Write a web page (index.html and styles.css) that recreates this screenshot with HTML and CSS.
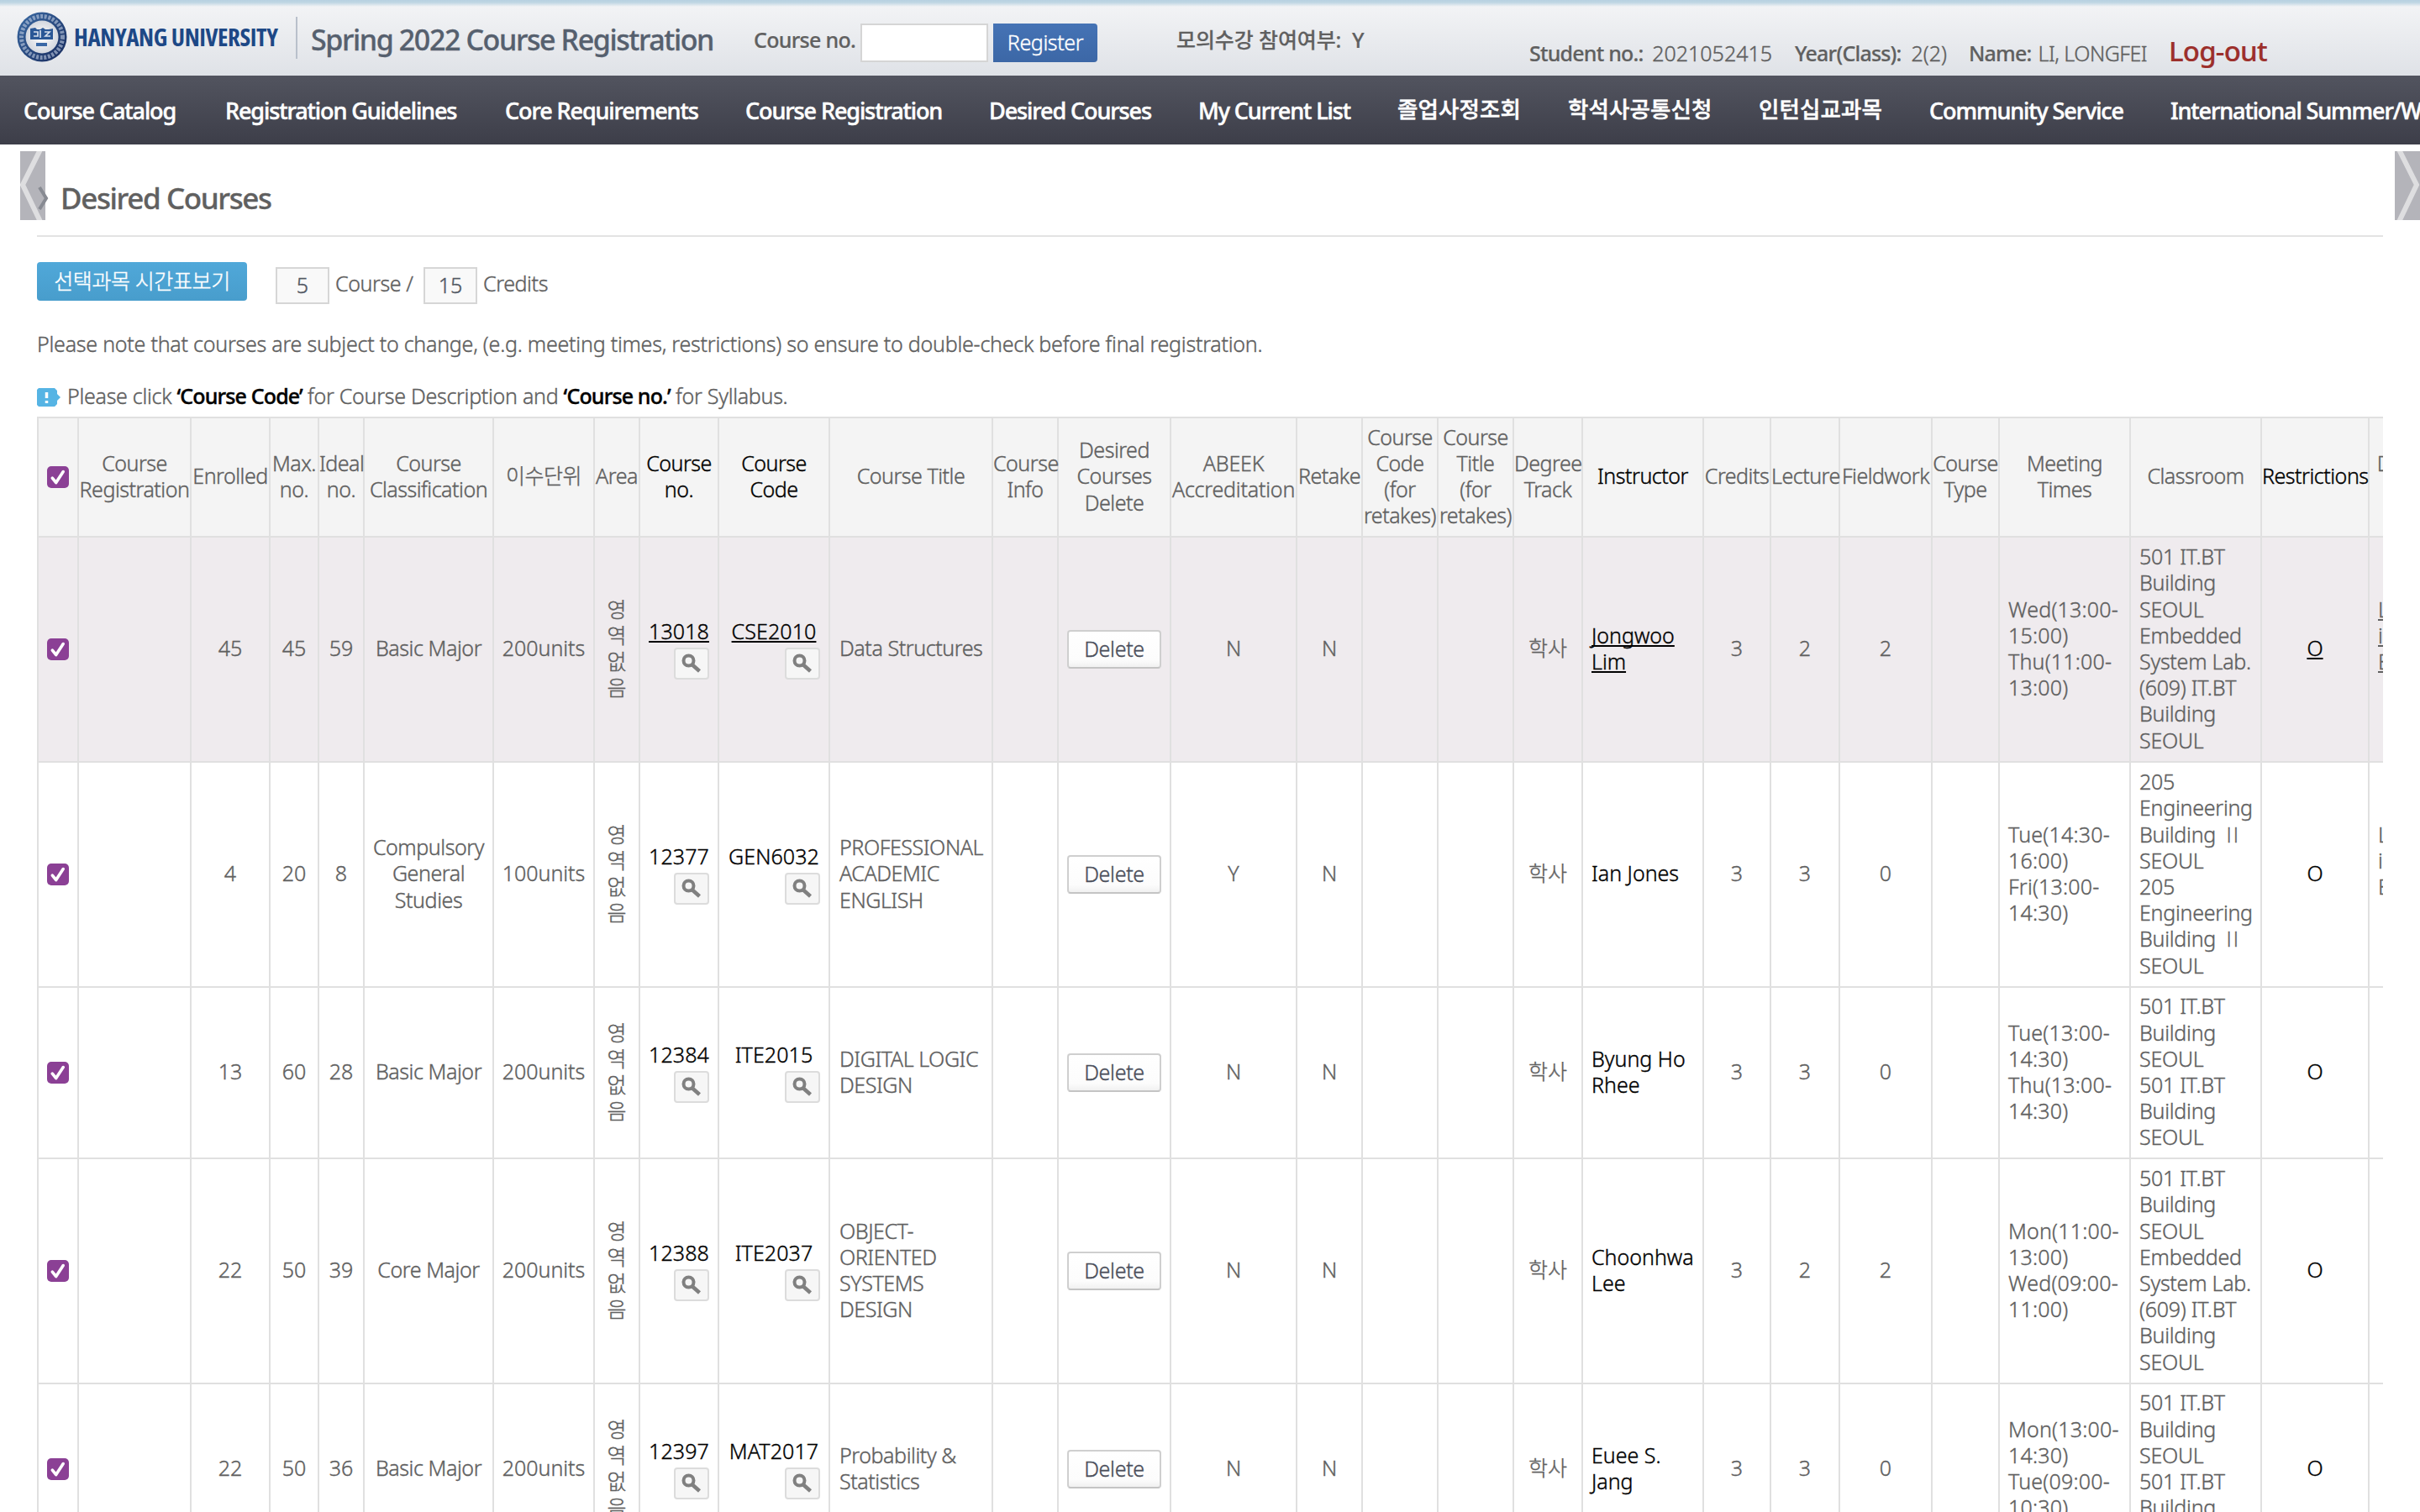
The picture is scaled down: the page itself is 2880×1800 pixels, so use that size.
FILE: index.html
```html
<!DOCTYPE html>
<html lang="ko">
<head>
<meta charset="utf-8">
<title>Spring 2022 Course Registration</title>
<link rel="stylesheet" href="styles.css">
</head>
<body>
<svg width="0" height="0" class="defs">
  <symbol id="check" viewBox="0 0 26 26"><rect width="26" height="26" rx="5" fill="#8b4095"/><path d="M6.300 14.200l4.400 5.300L19.200 6.600" fill="none" stroke="#fff" stroke-width="3.600" stroke-linecap="round" stroke-linejoin="round"/></symbol>
  <symbol id="lens" viewBox="0 0 42 38"><rect x="1" y="1" width="40" height="36" rx="3" fill="#f6f6f6" stroke="#dcdcdc" stroke-width="2"/><circle cx="17.500" cy="15.500" r="6" fill="#f6f6f6" stroke="#808080" stroke-width="4"/><path d="M22 20.500l8.500 7.500" stroke="#808080" stroke-width="4.500"/></symbol>
</svg>

<header class="top">
  <svg class="emblem" viewBox="0 0 60 60">
    <defs><radialGradient id="core"><stop offset="0" stop-color="#fff"/><stop offset="1" stop-color="#d3d7df"/></radialGradient>
    <linearGradient id="ring" x1="0" y1="0" x2="1" y2="1"><stop offset="0" stop-color="#3b6ba5"/><stop offset="1" stop-color="#172a5c"/></linearGradient></defs>
    <circle cx="30" cy="30" r="29.500" fill="url(#ring)"/>
    <circle cx="30" cy="30" r="24.500" fill="none" stroke="#c3cfe2" stroke-width="5" stroke-dasharray="3 1.700" opacity=".6"/>
    <circle cx="30" cy="30" r="19.500" fill="url(#core)"/>
    <path d="M16 20l6-1 2 2h4l3-2 3 2h4l5-1v13H16z" fill="#2a5796"/>
    <path d="M20 24h5v5h-5M28 22v9M33 24h6l-5 5h6" fill="none" stroke="#d5deec" stroke-width="1.700"/>
    <rect x="23" y="37" width="13" height="4" fill="#3a68a6"/>
  </svg>
  <div class="brand">HANYANG UNIVERSITY</div>
  <div class="divider"></div>
  <div class="site-title">Spring 2022 Course Registration</div>
  <div class="quick-label">Course no.</div>
  <div class="quick-input"></div>
  <div class="quick-btn">Register</div>
  <div class="mock">모의수강 참여여부:</div>
  <div class="mock-value">Y</div>
  <div class="who w-no"><b>Student no.:</b> <span>2021052415</span></div>
  <div class="who w-year"><b>Year(Class):</b> <span>2(2)</span></div>
  <div class="who w-name"><b>Name:</b> <span>LI, LONGFEI</span></div>
  <div class="logout">Log-out</div>
</header>

<nav class="menu">
  <a>Course Catalog</a><a>Registration Guidelines</a><a>Core Requirements</a><a>Course Registration</a><a>Desired Courses</a><a>My Current List</a><a class="ko">졸업사정조회</a><a class="ko">학석사공통신청</a><a class="ko">인턴십교과목</a><a>Community Service</a><a>International Summer/Winter</a>
</nav>

<svg class="slide prev" viewBox="0 0 30 82"><rect width="30" height="82" fill="#b4b4ba"/><path d="M25 -4L3 40l22 46" fill="none" stroke="#dedee0" stroke-width="6"/></svg>
<svg class="slide next" viewBox="0 0 30 82"><rect width="30" height="82" fill="#b4b4ba"/><path d="M4 -4l22 44L4 86" fill="none" stroke="#dedee0" stroke-width="6"/></svg>

<main class="page">
  <h1 class="heading"><svg class="mark" viewBox="0 0 14 28"><path d="M3 1l8 13-8 13" fill="none" stroke="#878a92" stroke-width="4"/></svg>Desired Courses</h1>

  <div class="tools">
    <div class="timetable">선택과목 시간표보기</div>
    <div class="count">5</div><div class="unit u1">Course /</div>
    <div class="count">15</div><div class="unit">Credits</div>
  </div>

  <p class="note">Please note that courses are subject to change, (e.g. meeting times, restrictions) so ensure to double-check before final registration.</p>
  <p class="tip"><svg class="tip-icon" viewBox="0 0 28 22"><path d="M2 0h19l3 3v4l4 4-4 4v4l-3 3H2l-2-2V2z" fill="#56b4e4"/><path d="M11.500 5v7M11.500 15v3" stroke="#fff" stroke-width="3.500"/></svg><span>Please click <b>‘Course Code’</b> for Course Description and <b>‘Course no.’</b> for Syllabus.</span></p>

  <div class="table-clip">
  <table class="courses">
    <colgroup><col class="w48"><col class="w134"><col class="w94"><col class="w58"><col class="w54"><col class="w154"><col class="w120"><col class="w54"><col class="w94"><col class="w132"><col class="w194"><col class="w78"><col class="w134"><col class="w150"><col class="w78"><col class="w90"><col class="w90"><col class="w82"><col class="w144"><col class="w80"><col class="w82"><col class="w110"><col class="w80"><col class="w156"><col class="w156"><col class="w128"><col class="w106"></colgroup>
    <tr class="head">
      <th><svg class="cb"><use href="#check"/></svg></th><th>Course<br>Registration</th><th>Enrolled</th><th>Max.<br>no.</th><th>Ideal<br>no.</th><th>Course<br>Classification</th><th>이수단위</th><th>Area</th><th class="dark">Course<br>no.</th><th class="dark">Course<br>Code</th><th>Course Title</th><th>Course<br>Info</th><th>Desired<br>Courses<br>Delete</th><th class="wide">ABEEK<br>Accreditation</th><th>Retake</th><th>Course<br>Code<br>(for<br>retakes)</th><th>Course<br>Title<br>(for<br>retakes)</th><th>Degree<br>Track</th><th class="dark">Instructor</th><th>Credits</th><th>Lecture</th><th>Fieldwork</th><th>Course<br>Type</th><th>Meeting<br>Times</th><th>Classroom</th><th class="dark">Restrictions</th><th>Delivery<br>Type</th>
    </tr>
    <tr class="tall picked">
      <td><svg class="cb"><use href="#check"/></svg></td><td></td><td>45</td><td>45</td><td>59</td><td class="txt">Basic Major</td><td>200units</td><td class="area">영<br>역<br>없<br>음</td><td class="look"><a>13018</a><svg><use href="#lens"/></svg></td><td class="look"><a>CSE2010</a><svg><use href="#lens"/></svg></td><td class="left txt">Data Structures</td><td></td><td><div class="del">Delete</div></td><td>N</td><td>N</td><td></td><td></td><td>학사</td><td class="left dark"><a>Jongwoo<br>Lim</a></td><td>3</td><td>2</td><td>2</td><td></td><td class="left time">Wed(13:00-<br>15:00)<br>Thu(11:00-<br>13:00)</td><td class="left room">501 IT.BT<br>Building<br>SEOUL<br>Embedded<br>System Lab.<br>(609) IT.BT<br>Building<br>SEOUL</td><td class="dark"><a>O</a></td><td class="left"><a>Lecture<br>in<br>English</a><br>&nbsp;</td>
    </tr>
    <tr class="tall">
      <td><svg class="cb"><use href="#check"/></svg></td><td></td><td>4</td><td>20</td><td>8</td><td class="txt">Compulsory<br>General<br>Studies</td><td>100units</td><td class="area">영<br>역<br>없<br>음</td><td class="look"><a>12377</a><svg><use href="#lens"/></svg></td><td class="look"><a>GEN6032</a><svg><use href="#lens"/></svg></td><td class="left txt">PROFESSIONAL<br>ACADEMIC<br>ENGLISH</td><td></td><td><div class="del">Delete</div></td><td>Y</td><td>N</td><td></td><td></td><td>학사</td><td class="left dark">Ian Jones</td><td>3</td><td>3</td><td>0</td><td></td><td class="left time">Tue(14:30-<br>16:00)<br>Fri(13:00-<br>14:30)</td><td class="left room">205<br>Engineering<br>Building&nbsp; <i>II</i><br>SEOUL<br>205<br>Engineering<br>Building&nbsp; <i>II</i><br>SEOUL</td><td class="dark">O</td><td class="left">Lecture<br>in<br>English<br>&nbsp;</td>
    </tr>
    <tr class="short">
      <td><svg class="cb"><use href="#check"/></svg></td><td></td><td>13</td><td>60</td><td>28</td><td class="txt">Basic Major</td><td>200units</td><td class="area">영<br>역<br>없<br>음</td><td class="look"><a>12384</a><svg><use href="#lens"/></svg></td><td class="look"><a>ITE2015</a><svg><use href="#lens"/></svg></td><td class="left txt">DIGITAL LOGIC<br>DESIGN</td><td></td><td><div class="del">Delete</div></td><td>N</td><td>N</td><td></td><td></td><td>학사</td><td class="left dark">Byung Ho<br>Rhee</td><td>3</td><td>3</td><td>0</td><td></td><td class="left time">Tue(13:00-<br>14:30)<br>Thu(13:00-<br>14:30)</td><td class="left room">501 IT.BT<br>Building<br>SEOUL<br>501 IT.BT<br>Building<br>SEOUL</td><td class="dark">O</td><td></td>
    </tr>
    <tr class="tall">
      <td><svg class="cb"><use href="#check"/></svg></td><td></td><td>22</td><td>50</td><td>39</td><td class="txt">Core Major</td><td>200units</td><td class="area">영<br>역<br>없<br>음</td><td class="look"><a>12388</a><svg><use href="#lens"/></svg></td><td class="look"><a>ITE2037</a><svg><use href="#lens"/></svg></td><td class="left txt">OBJECT-<br>ORIENTED<br>SYSTEMS<br>DESIGN</td><td></td><td><div class="del">Delete</div></td><td>N</td><td>N</td><td></td><td></td><td>학사</td><td class="left dark">Choonhwa<br>Lee</td><td>3</td><td>2</td><td>2</td><td></td><td class="left time">Mon(11:00-<br>13:00)<br>Wed(09:00-<br>11:00)</td><td class="left room">501 IT.BT<br>Building<br>SEOUL<br>Embedded<br>System Lab.<br>(609) IT.BT<br>Building<br>SEOUL</td><td class="dark">O</td><td></td>
    </tr>
    <tr class="short">
      <td><svg class="cb"><use href="#check"/></svg></td><td></td><td>22</td><td>50</td><td>36</td><td class="txt">Basic Major</td><td>200units</td><td class="area">영<br>역<br>없<br>음</td><td class="look"><a>12397</a><svg><use href="#lens"/></svg></td><td class="look"><a>MAT2017</a><svg><use href="#lens"/></svg></td><td class="left txt">Probability &amp;<br>Statistics</td><td></td><td><div class="del">Delete</div></td><td>N</td><td>N</td><td></td><td></td><td>학사</td><td class="left dark">Euee S.<br>Jang</td><td>3</td><td>3</td><td>0</td><td></td><td class="left time">Mon(13:00-<br>14:30)<br>Tue(09:00-<br>10:30)</td><td class="left room">501 IT.BT<br>Building<br>SEOUL<br>501 IT.BT<br>Building<br>SEOUL</td><td class="dark">O</td><td></td>
    </tr>
  </table>
  </div>
</main>
</body>
</html>
```
FILE: styles.css
```css
* { box-sizing: border-box; }
html, body { height: 1800px; overflow: hidden; }
body {
  margin: 0;
  background: #fff;
  color: #606060;
  font: 300 25px/32px "Noto Sans", "Noto Sans CJK KR", sans-serif;
  -webkit-text-stroke: .4px currentColor;
  position: relative;
}
svg { display: block; }
.defs { position: absolute; }
b { font-weight: 500; }

/* header */
.top {
  height: 90px;
  display: flex;
  align-items: flex-start;
  white-space: nowrap;
  background: linear-gradient(#b7d1e1 0, #bfd6e3 3px, #f2f3f5 8px, #dfe2e7 90px);
}
.top > * { flex: none; }
.emblem { width: 60px; height: 60px; margin: 14px 0 0 20px; }
.brand {
  width: 244px; margin: 24px 0 0 8px;
  font: 700 29px/40px "Open Sans", sans-serif;
  font-stretch: 75%; letter-spacing: -.4px;
  color: #1d4886;
  -webkit-text-stroke: 0;
}
.divider { width: 2px; height: 50px; margin: 20px 0 0 20px; background: #b9c0cb; }
.site-title {
  width: 478px; margin: 27px 0 0 16px;
  font-size: 34px; line-height: 40px; font-weight: 500; letter-spacing: -1.4px;
  color: #56606e;
  -webkit-text-stroke: .3px;
}
.quick-label { width: 122px; margin: 31px 0 0 49px; font-weight: 500; letter-spacing: -.7px; -webkit-text-stroke: .2px; }
.quick-input { width: 152px; height: 46px; margin: 28px 0 0 5px; background: #fff; border: 2px solid #d5d5d5; }
.quick-btn {
  width: 124px; height: 46px; margin: 28px 0 0 6px;
  line-height: 45px; text-align: center; letter-spacing: -.4px;
  color: #fff; background: linear-gradient(#4573b5, #3c67a6);
  border-radius: 0 4px 4px 0;
}
.mock { width: 198px; margin: 31px 0 0 94px; font-weight: 500; letter-spacing: -.1px; -webkit-text-stroke: .2px; }
.mock-value { width: 20px; margin: 31px 0 0 11px; font-weight: 500; -webkit-text-stroke: .2px; }
.who { display: flex; justify-content: space-between; margin-top: 47px; }
.who b { letter-spacing: -.8px; -webkit-text-stroke: .2px; }
.w-no { width: 289px; margin-left: 191px; }
.w-year { width: 181px; margin-left: 27px; }
.w-name { width: 212px; margin-left: 26px; }
.w-name span { letter-spacing: -.5px; }
.logout { margin: 41px 0 0 26px; font-size: 33px; line-height: 40px; font-weight: 500; letter-spacing: -.8px; color: #9c2f2b; -webkit-text-stroke: .2px; }

/* main menu */
.menu {
  height: 82px;
  overflow: hidden;
  padding-left: 28px;
  display: grid;
  grid-template-columns: 240px 333px 286px 290px 249px 237px 203px 227px 203px 287px 400px;
  background: linear-gradient(#52545f, #3d3e49);
  color: #fff;
  font-size: 27px; font-weight: 500; line-height: 83px; letter-spacing: -1.1px;
  white-space: nowrap;
  -webkit-text-stroke: .5px;
}
.menu .ko { font-size: 26.500px; letter-spacing: .1px; line-height: 81px; }

.slide { position: absolute; top: 180px; width: 30px; height: 82px; }
.prev { left: 24px; }
.next { right: 0; }

/* page */
.page { width: 2792px; margin-left: 44px; }
.heading {
  margin: 0; padding: 44px 0 24px;
  border-bottom: 2px solid #e3e3e3;
  display: flex;
  font-size: 35px; line-height: 40px; font-weight: 500; letter-spacing: -1.4px;
  -webkit-text-stroke: .3px;
}
.mark { position: relative; width: 14px; height: 28px; margin: 6px 14px 0 0; }
.tools { display: flex; align-items: flex-start; padding-top: 30px; height: 82px; }
.timetable {
  width: 250px; height: 46px; margin-right: 34px;
  line-height: 44px; text-align: center; letter-spacing: -.4px;
  color: #fff; background: linear-gradient(#50a8d9, #489dcc);
  border-radius: 4px;
}
.count {
  width: 64px; height: 44px; margin-top: 6px;
  border: 2px solid #d6d6d6; background: #f9f9f9;
  line-height: 39px; text-align: center; color: #515863;
}
.unit { margin: 9px 0 0 7px; letter-spacing: -.4px; }
.u1 { width: 105px; }
.note { margin: 29px 0 30px; letter-spacing: -.235px; }
.tip { margin: 0 0 9px; display: flex; letter-spacing: -.28px; }
.tip b { color: #000; letter-spacing: -.85px; -webkit-text-stroke: .4px #000; }
.tip-icon { width: 28px; height: 22px; margin: 7px 8px 0 0; }

/* course table */
.table-clip { width: 2792px; overflow: hidden; }
.courses {
  width: 2880px;
  table-layout: fixed;
  border-collapse: separate; border-spacing: 0;
  border-top: 2px solid #e0e0e0;
  line-height: 31.2px;
  white-space: nowrap;
}
.w48 { width: 48px; } .w54 { width: 54px; } .w58 { width: 58px; } .w78 { width: 78px; }
.w80 { width: 80px; } .w82 { width: 82px; } .w90 { width: 90px; } .w94 { width: 94px; }
.w106 { width: 106px; } .w110 { width: 110px; } .w120 { width: 120px; } .w128 { width: 128px; }
.w132 { width: 132px; } .w134 { width: 134px; } .w144 { width: 144px; } .w150 { width: 150px; }
.w154 { width: 154px; } .w156 { width: 156px; } .w194 { width: 194px; }
.courses th, .courses td {
  padding: 0 0 2px;
  border: solid #e0e0e0; border-width: 0 0 2px 2px;
  font-weight: 300; text-align: center; vertical-align: middle;
}
.head { height: 142px; background: #f4f4f4; }
.head th { letter-spacing: -.48px; padding-bottom: 2px; }
.head .wide { letter-spacing: -.2px; }
.tall { height: 268px; }
.short { height: 204px; }
.picked { background: #efebee; }
.courses .dark, .look { color: #000; }
.txt { letter-spacing: -.42px; }
.courses .left { text-align: left; padding-left: 10px; }
.courses .txt.left { padding-left: 11px; }
.time { letter-spacing: .2px; }
.room { letter-spacing: -.25px; }
.room i { font-family: "Open Sans", sans-serif; font-style: normal; letter-spacing: 2px; }
.courses .look { text-align: center; padding-bottom: 1px; letter-spacing: .1px; }
.look a { display: block; width: fit-content; margin: 0 auto; }
.look svg { width: 42px; height: 38px; margin: 3px 10px 0 auto; }
.picked a { text-decoration: underline 2px; text-underline-offset: 2px; text-decoration-skip-ink: none; }
.cb { width: 26px; height: 26px; margin: 2px auto 0; }
.del {
  width: 112px; height: 46px; margin: 1px auto 0;
  border: 2px solid #cfcfcf; border-bottom-color: #c4c4c4; border-radius: 4px;
  background: linear-gradient(#fff, #fcfcfc 80%, #f1f1f1);
  color: #4b4f5b; line-height: 40px; letter-spacing: -.3px;
}
```
